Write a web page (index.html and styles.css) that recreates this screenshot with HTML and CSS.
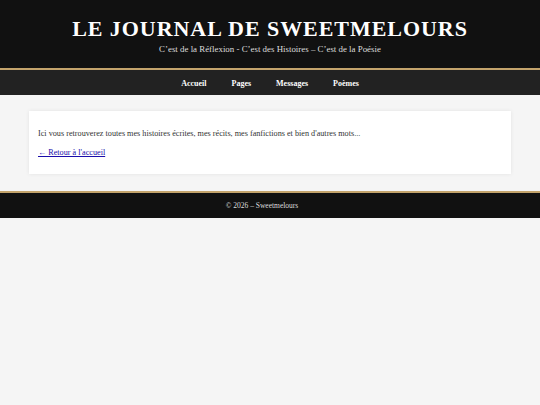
FILE: index.html
```html
<!DOCTYPE html>
<html lang="fr">
<head>
<meta charset="utf-8">
<title>Le Journal de Sweetmelours</title>
<link rel="stylesheet" href="styles.css">
</head>
<body>
<header class="site-header">
  <h1 class="site-title">LE JOURNAL DE SWEETMELOURS</h1>
  <p class="site-tagline">C’est de la Réflexion - C’est des Histoires – C’est de la Poésie</p>
</header>
<nav class="site-nav">
  <a href="#">Accueil</a>
  <a href="#">Pages</a>
  <a href="#">Messages</a>
  <a href="#">Poèmes</a>
</nav>
<main class="site-main">
  <section class="card">
    <p class="intro">Ici vous retrouverez toutes mes histoires écrites, mes récits, mes fanfictions et bien d'autres mots...</p>
    <p class="back"><a href="#">← Retour à l'accueil</a></p>
  </section>
</main>
<footer class="site-footer"><span class="copy">© 2026 – Sweetmelours</span></footer>
</body>
</html>
```
FILE: styles.css
```css
html, body {
  margin: 0;
  padding: 0;
  background: #f5f5f5;
  font-family: "Liberation Serif", "DejaVu Serif", serif;
}
.site-header {
  background: #111111;
  color: #ffffff;
  text-align: center;
  height: 70px;
  box-sizing: border-box;
  padding-top: 17px;
  border-bottom: 2px solid #c4a46c;
}
.site-title {
  margin: 0;
  font-size: 22px;
  line-height: 24px;
  font-weight: bold;
  letter-spacing: 0.95px;
}
.site-tagline {
  margin: 1px 0 0;
  font-size: 8.9px;
  line-height: 14px;
  color: #dddddd;
}
.site-nav {
  background: #222222;
  height: 25px;
  display: flex;
  justify-content: center;
  align-items: center;
  gap: 25px;
}
.site-nav a {
  color: #ffffff;
  text-decoration: none;
  font-weight: bold;
  font-size: 8px;
  padding-top: 1px;
}
.site-main {
  padding: 16px 29px 17px;
}
.card {
  background: #ffffff;
  box-shadow: 0 0 4px rgba(0,0,0,0.08);
  padding: 17px 9px 15px;
}
.intro {
  margin: 0;
  font-size: 8.2px;
  line-height: 12px;
  color: #333333;
}
.back {
  margin: 7px 0 0;
  font-size: 8.2px;
  line-height: 12px;
}
.back a {
  color: #1a0dab;
}
.site-footer {
  background: #111111;
  color: #dddddd;
  border-top: 2px solid #c4a46c;
  height: 25px;
  display: flex;
  justify-content: center;
  align-items: center;
  font-size: 7.5px;
}
.copy {
  padding-right: 16px;
}
```
